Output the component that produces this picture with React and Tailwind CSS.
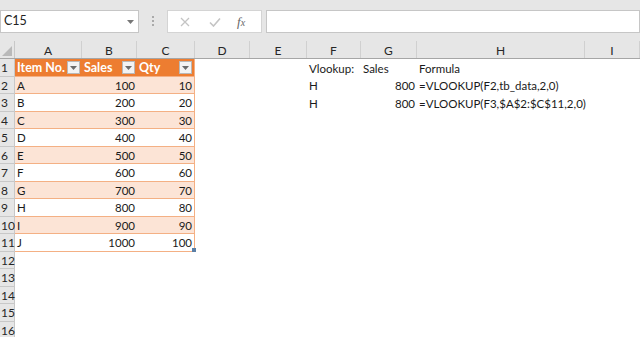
import React from 'react';

const cols = [
  { key: 'A', w: 67 },
  { key: 'B', w: 55 },
  { key: 'C', w: 58 },
  { key: 'D', w: 55 },
  { key: 'E', w: 57 },
  { key: 'F', w: 54 },
  { key: 'G', w: 56 },
  { key: 'H', w: 168 },
  { key: 'I', w: 55 },
];

const data = [
  ['A', 100, 10],
  ['B', 200, 20],
  ['C', 300, 30],
  ['D', 400, 40],
  ['E', 500, 50],
  ['F', 600, 60],
  ['G', 700, 70],
  ['H', 800, 80],
  ['I', 900, 90],
  ['J', 1000, 100],
];

const side = {
  1: ['Vlookup:', 'Sales', 'Formula'],
  2: ['H', '800', '=VLOOKUP(F2,tb_data,2,0)'],
  3: ['H', '800', '=VLOOKUP(F3,$A$2:$C$11,2,0)'],
};

function FilterBtn() {
  return (
    <span className="ml-auto mr-[2px] flex h-[13px] w-[13px] items-center justify-center border border-[#b8b8b8] bg-[#f3f3f3]">
      <svg width="7" height="4" viewBox="0 0 7 4">
        <path d="M0 0h7L3.5 4z" fill="#6b6b6b" />
      </svg>
    </span>
  );
}

function Toolbar() {
  return (
    <div className="flex h-[41px] items-start bg-[#e6e6e6] pt-[10px]">
      <div className="flex h-[23px] w-[139px] items-center border border-[#c6c6c6] bg-white pl-[3px] pr-[4px] text-[12.5px] text-[#222]">
        <span>C15</span>
        <svg className="ml-auto" width="7" height="4" viewBox="0 0 7 4">
          <path d="M0 0h7L3.5 4z" fill="#777" />
        </svg>
      </div>
      <div className="flex w-[28px] flex-col items-center justify-center gap-[2px] pt-[6px]">
        <span className="h-[2px] w-[2px] bg-[#aaa]" />
        <span className="h-[2px] w-[2px] bg-[#aaa]" />
        <span className="h-[2px] w-[2px] bg-[#aaa]" />
      </div>
      <div className="flex h-[23px] w-[95px] items-center border border-[#d4d4d4] bg-white">
        <svg className="ml-[12px]" width="10" height="10" viewBox="0 0 10 10">
          <path d="M1 1l8 8M9 1l-8 8" stroke="#c4c4c4" strokeWidth="1.3" />
        </svg>
        <svg className="ml-[19px]" width="12" height="10" viewBox="0 0 12 10">
          <path d="M1 5.5l3.5 3.5L11 1.5" stroke="#c4c4c4" strokeWidth="1.6" fill="none" />
        </svg>
        <span className="ml-[16px] font-['Liberation_Serif',serif] text-[13px] italic text-[#666]">
          f<span className="text-[10px]">x</span>
        </span>
      </div>
      <div className="ml-[4px] h-[23px] flex-1 border border-[#c6c6c6] bg-white" />
    </div>
  );
}

function ColHeader() {
  return (
    <div className="flex h-[18px] border-b border-[#a6a6a6] bg-[#e6e6e6]">
      <div className="relative w-[15px] shrink-0 border-r border-[#c8c8c8]">
        <svg className="absolute bottom-[2px] right-[2px]" width="10" height="10" viewBox="0 0 10 10">
          <path d="M10 0v10H0z" fill="#b9b9b9" />
        </svg>
      </div>
      {cols.map((c) => (
        <div
          key={c.key}
          style={{ width: c.w }}
          className="flex shrink-0 items-center justify-center border-r border-[#d0d0d0] pt-[3px] text-[12px] text-[#262626]"
        >
          {c.key}
        </div>
      ))}
    </div>
  );
}

function Row({ n }) {
  const item = n >= 2 && n <= 11 ? data[n - 2] : null;
  const banded = n >= 2 && n <= 11 && n % 2 === 0;
  const inTable = n >= 1 && n <= 11;
  const s = side[n];
  const tableBg = n === 1 ? 'bg-[#ed7d31] text-white font-bold text-[12.5px]' : banded ? 'bg-[#fce4d6]' : 'bg-white';
  const tableBorder = inTable ? 'border-b border-[#f4b084]' : '';

  return (
    <div className="flex h-[17.5px]">
      <div className="flex w-[15px] shrink-0 items-center border-b border-r border-[#c8c8c8] bg-[#e6e6e6] pl-[1px] pt-[2px] text-[12px] text-[#262626]">
        {n}
      </div>
      {inTable ? (
        <div className={`flex w-[180px] shrink-0 border-r border-[#f4b084] pt-[1px] ${tableBg} ${tableBorder}`}>
          <div className="flex w-[67px] items-center pl-[2px]">
            {n === 1 ? 'Item No.' : item[0]}
            {n === 1 && <FilterBtn />}
          </div>
          <div className={`flex w-[55px] items-center ${n === 1 ? 'pl-[2px]' : 'justify-end pr-[2px]'}`}>
            {n === 1 ? 'Sales' : item[1]}
            {n === 1 && <FilterBtn />}
          </div>
          <div className={`relative flex w-[57px] items-center ${n === 1 ? 'pl-[2px]' : 'justify-end pr-[2px]'}`}>
            {n === 1 ? 'Qty' : item[2]}
            {n === 1 && <FilterBtn />}
            {n === 11 && <span className="absolute bottom-[-1px] right-[-2px] h-[4px] w-[4px] bg-[#5b7fa6]" />}
          </div>
        </div>
      ) : (
        <div className="w-[180px] shrink-0" />
      )}
      <div className="w-[112px] shrink-0" />
      <div className="flex w-[54px] shrink-0 items-center pl-[2px] pt-[1px]">{s ? s[0] : ''}</div>
      <div className={`flex w-[56px] shrink-0 items-center pt-[1px] ${n === 1 ? 'pl-[2px]' : 'justify-end pr-[2px]'}`}>{s ? s[1] : ''}</div>
      <div className="flex w-[168px] shrink-0 items-center whitespace-nowrap pl-[2px] pt-[1px]">{s ? s[2] : ''}</div>
    </div>
  );
}

export default function App() {
  const rows = Array.from({ length: 16 }, (_, i) => i + 1);
  return (
    <div className="h-[337px] w-[640px] overflow-hidden bg-white font-['Lato','Open_Sans',sans-serif] text-[11.5px] leading-none text-[#1a1a1a]">
      <Toolbar />
      <ColHeader />
      {rows.map((n) => (
        <Row key={n} n={n} />
      ))}
    </div>
  );
}
